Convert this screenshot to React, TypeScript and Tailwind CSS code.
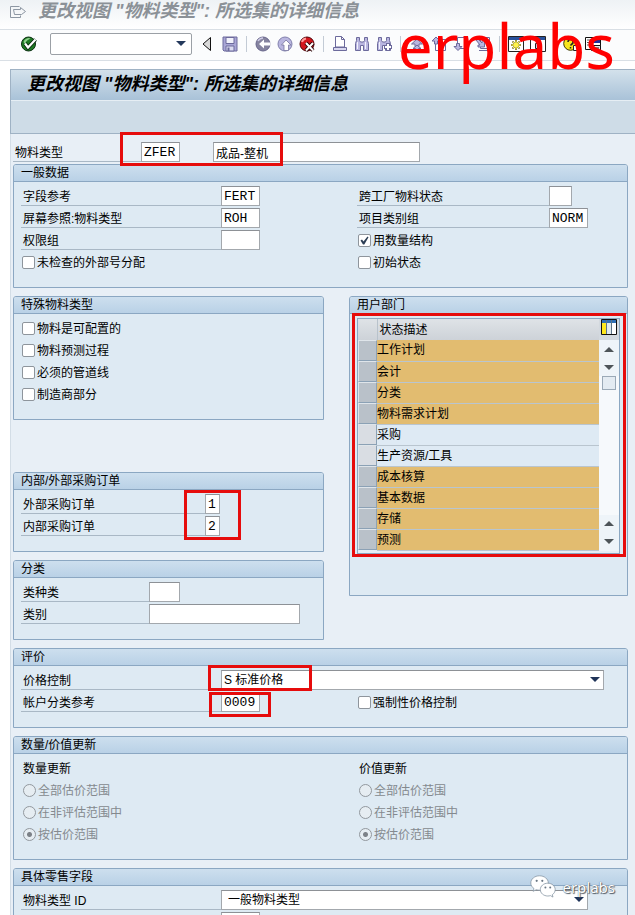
import React, { useId, useState } from 'react';

const DEPARTMENTS = [
  { name: '工作计划', selected: true },
  { name: '会计', selected: true },
  { name: '分类', selected: true },
  { name: '物料需求计划', selected: true },
  { name: '采购', selected: false },
  { name: '生产资源/工具', selected: false },
  { name: '成本核算', selected: true },
  { name: '基本数据', selected: true },
  { name: '存储', selected: true },
  { name: '预测', selected: true },
];

const RANGES = ['全部估价范围', '在非评估范围中', '按估价范围'];

/* ---------- Toolbar icons ---------- */

function Icon({ children }: { children: React.ReactNode }) {
  return (
    <svg viewBox="0 0 16 16" className="block size-4" fill="none">
      {children}
    </svg>
  );
}

const LILAC = '#b9b6e0';
const INK = '#6c6a9c';

const OkIcon = () => (
  <Icon>
    <circle cx="7.5" cy="8" r="7" fill="#1f7a24" stroke="#0b2f12" />
    <path d="M2.5 6a5.5 5.5 0 0 1 7-3.6C7 3.5 5 5 4 8z" fill="#8fd08c" />
    <path d="M4 7.5l3 4L14.5 3.5" stroke="#06260c" strokeWidth="4" />
    <path d="M4 7.5l3 4L14.5 3.5" stroke="#fff" strokeWidth="2.2" />
  </Icon>
);

const CollapseIcon = () => (
  <Icon>
    <path d="M12.5 1.5v13L5 8z" fill="#d9d9d9" stroke="#111" />
  </Icon>
);

const SaveIcon = () => (
  <Icon>
    <path d="M1 1h14v14H2l-1-1z" fill="#a9a6d6" stroke={INK} />
    <path d="M4 1.5h8v6H4z" fill="#f1f1fb" stroke={INK} />
    <path d="M4 10h8v5H4z" fill="#dcdcf2" stroke={INK} />
    <path d="M5.5 11.5h2V15h-2z" fill={INK} />
  </Icon>
);

const BackIcon = () => (
  <Icon>
    <circle cx="8" cy="8" r="7" fill="#85839f" stroke="#67658b" />
    <path d="M3 5a6 6 0 0 1 5-3" stroke="#cfcde6" strokeWidth="1.5" />
    <path d="M4 8l5-4.5v3h6.5v3H9v3z" fill="#fff" />
  </Icon>
);

const ExitIcon = () => (
  <Icon>
    <circle cx="8" cy="8" r="7" fill={LILAC} stroke="#8180ac" />
    <path d="M9 4L4.500 9H7v5.500h4.500V9H14z" fill="#fff" stroke="#77759f" strokeWidth=".8" />
  </Icon>
);

const CancelIcon = () => (
  <Icon>
    <circle cx="8" cy="8" r="7" fill="#d3141c" stroke="#4a0508" />
    <path d="M3 6a5 5 0 0 1 4-3.500" stroke="#ff9a9a" strokeWidth="2" />
    <path d="M7 7l7 7.500M14 7l-7 7.500" stroke="#2b0204" strokeWidth="4" />
    <path d="M7 7l7 7.500M14 7l-7 7.500" stroke="#fff" strokeWidth="2" />
  </Icon>
);

const PrintIcon = () => (
  <Icon>
    <path d="M3.500.500h6l3 3V11h-9z" fill="#fff" stroke={INK} />
    <path d="M9.500.500v3h3" stroke={INK} />
    <path d="M1.500 11.500h13v3h-13z" fill="#d8d7ee" stroke={INK} />
  </Icon>
);

const Binoculars = () => (
  <path
    d="M2.500 1.500h3v3l1 1.500h3l1-1.500v-3h3v3l1 3v7h-5v-5h-3v5h-5v-7l1-3z"
    fill={LILAC}
    stroke={INK}
  />
);

const FindIcon = () => (
  <Icon>
    <Binoculars />
    <path d="M3.500 6v7M11.500 6v7" stroke="#f3f3fc" />
  </Icon>
);

const FindNextIcon = () => (
  <Icon>
    <Binoculars />
    <path d="M3.500 6v7" stroke="#f3f3fc" />
    <path d="M12 7v8M8 11h8" stroke={INK} strokeWidth="4" />
    <path d="M12 8v6M9 11h6" stroke="#fff" strokeWidth="2" />
  </Icon>
);

const FirstPageIcon = () => (
  <Icon>
    <path d="M3.500 1.500h9" stroke={INK} />
    <path d="M8 3L2.500 8H6v2.500h4V8h3.500z" fill={LILAC} stroke={INK} />
    <path d="M8 9l-4 3.500h2.500V15h3v-2.500H12z" fill={LILAC} stroke={INK} />
  </Icon>
);

const PrevPageIcon = () => (
  <Icon>
    <path d="M4.500 3.500h10v11h-10z" fill="#fff" stroke={INK} />
    <path d="M5 1L1 5h2.500v3h3V5H9z" fill={LILAC} stroke={INK} />
  </Icon>
);

const NextPageIcon = () => (
  <Icon>
    <path d="M4.500 1.500h10v11h-10z" fill="#fff" stroke={INK} />
    <path d="M5 14.500l-4-4h2.500v-3h3v3H9z" fill={LILAC} stroke={INK} />
  </Icon>
);

const LastPageIcon = () => (
  <Icon>
    <path d="M5.500 1.500h9v11h-9z" fill="#fff" stroke={INK} />
    <path d="M2 2l5 5V4.500h2.500V11H3V9h2L1 4z" fill={LILAC} stroke={INK} />
    <path d="M4 14.500h9" stroke={INK} />
  </Icon>
);

const NewSessionIcon = () => (
  <Icon>
    <path d="M.5.500h15v15H.500z" fill="#fff" stroke="#222" />
    <path d="M1 1h14v3H1z" fill="#27509b" />
    <path d="M8 4v10M3 9h10M4.500 5.500l7 7M11.500 5.500l-7 7" stroke="#5b5200" strokeWidth="1.600" />
    <path d="M8 4.500v9M3.500 9h9M5 6l6 6M11 6l-6 6" stroke="#fff34a" />
    <circle cx="8" cy="9" r="2.500" fill="#fff34a" />
  </Icon>
);

const ShortcutIcon = () => (
  <Icon>
    <path d="M.5.500h15v15H.500z" fill="#fff" stroke="#222" />
    <path d="M1 1h14v3H1z" fill="#27509b" />
    <path d="M5.500 7.500h5v5h-5z" fill="#cfe0f4" stroke="#222" />
  </Icon>
);

const HelpIcon = () => (
  <Icon>
    <circle cx="7.500" cy="7.500" r="6.800" fill="#f7e61c" stroke="#3b3700" />
    <path d="M5 6a2.500 2.500 0 1 1 3.500 2.300l-1 1.200M7.500 11v1.500" stroke="#222" strokeWidth="1.500" />
    <path d="M10.500 9.500h5v5h-5z" fill="#fff" stroke="#222" />
  </Icon>
);

const LayoutIcon = () => (
  <Icon>
    <path d="M.5 1.500h15v12H.500z" fill="#fff" stroke="#111" />
    <path d="M8 2h7v5H8z" fill="#1e2f9b" />
    <path d="M2 4h5M2 6.500h5M2 9h4" stroke="#555" />
    <path d="M6.500 9.500h9v5h-9z" fill="#e8e8e8" stroke="#111" />
    <path d="M8 12h6" stroke="#111" />
  </Icon>
);

const TableSettingsIcon = () => (
  <Icon>
    <path d="M.5.500h15v15H.500z" fill="#fff" stroke="#111" />
    <path d="M1 1h14v3H1z" fill="#2f6fb5" />
    <path d="M1 4h4.500v11H1z" fill="#ffe81e" />
    <path d="M6 4h4v11H6z" fill="#dfe8ee" />
    <path d="M5.500 1v14M10.500 1v14" stroke="#5d7488" />
  </Icon>
);

const WeChatIcon = () => (
  <svg viewBox="0 0 26 24" className="h-6 w-[26px]" fill="#fff" stroke="#8795a3" strokeWidth=".8">
    <path d="M9.500.8C4.600.8.800 4 .800 8c0 2.300 1.200 4.200 3.200 5.600L3.200 16.300l3.100-1.600c1 .3 2.100.5 3.200.5 4.900 0 8.800-3.200 8.800-7.200S14.400.8 9.500.8z" />
    <path d="M17.800 8.200c-4.200 0-7.500 2.900-7.500 6.400s3.300 6.400 7.500 6.400c.9 0 1.800-.1 2.600-.4l2.600 1.500-.7-2.400c1.800-1.200 2.900-3 2.900-5.100 0-3.500-3.200-6.400-7.400-6.400z" />
    <g fill="#6b7885" stroke="none">
      <circle cx="6.700" cy="5.800" r="1.100" />
      <circle cx="12.300" cy="5.800" r="1.100" />
      <circle cx="15.400" cy="12.500" r="1" />
      <circle cx="20.200" cy="12.500" r="1" />
    </g>
  </svg>
);

/* ---------- Form building blocks ---------- */

function ToolButton({ label, children }: { label: string; children: React.ReactNode }) {
  return (
    <button type="button" aria-label={label} title={label} className="size-4 shrink-0">
      {children}
    </button>
  );
}

const Separator = () => <span className="mx-0.5 h-4 w-px shrink-0 bg-[#c3cbd5]" />;

const FIELD =
  'h-5 border border-[#a3a8ad] border-t-[#8d9196] bg-white px-0.5 font-["Liberation_Mono","Noto_Sans_CJK_SC",monospace] text-[13px] leading-4 text-black outline-none focus:bg-[#fff9cf]';

const LABEL = 'block h-5 shrink-0 border-b border-[#a9b8c5] pl-0.5 leading-[22px]';

type FieldProps = { label: string; labelWidth: string; width: string; value?: string };

function Field({ label, labelWidth, width, value = '' }: FieldProps) {
  const id = useId();
  return (
    <div className="flex h-[22px]">
      <label htmlFor={id} className={`${LABEL} ${labelWidth}`}>{label}</label>
      <input id={id} type="text" defaultValue={value} className={`${FIELD} ${width}`} />
    </div>
  );
}

function Arrow({ up = false }: { up?: boolean }) {
  return (
    <svg viewBox="0 0 10 5" className="h-[5px] w-2.5" fill="currentColor">
      <path d={up ? 'M0 5h10L5 0z' : 'M0 0h10L5 5z'} />
    </svg>
  );
}

type SelectProps = { label: string; options: string[]; className: string; indent: string };

function SelectField({ label, options, className, indent }: SelectProps) {
  const id = useId();
  return (
    <div className={`flex h-[22px] ${className}`}>
      <label htmlFor={id} className={`${LABEL} w-[200px]`}>{label}</label>
      <div className="relative h-5 flex-1">
        <select
          id={id}
          className={`block h-5 w-full appearance-none border border-[#a3a8ad] border-t-[#8d9196] bg-white pr-5 text-xs leading-4 text-black outline-none ${indent}`}
        >
          {options.map((o) => (
            <option key={o}>{o}</option>
          ))}
        </select>
        <span className="pointer-events-none absolute top-[7px] right-1 text-[#1f3358]">
          <Arrow />
        </span>
      </div>
    </div>
  );
}

function Check({ label, defaultChecked = false }: { label: string; defaultChecked?: boolean }) {
  return (
    <label className="flex h-[22px] items-start pl-px leading-[22px]">
      <span className="mt-1 mr-0.5 grid shrink-0">
        <input
          type="checkbox"
          defaultChecked={defaultChecked}
          className="peer col-start-1 row-start-1 size-[13px] appearance-none rounded-[2px] border border-[#8e959c] bg-white"
        />
        <svg
          viewBox="0 0 13 13"
          className="pointer-events-none invisible col-start-1 row-start-1 size-[13px] peer-checked:visible"
          fill="#2c3e55"
        >
          <path d="M2.500 6.500L4 5.500l1.500 2L9.500 2.500l1 .7L6.300 10.500H5z" />
        </svg>
      </span>
      {label}
    </label>
  );
}

function RadioGroup({ title, name }: { title: string; name: string }) {
  return (
    <fieldset disabled className="min-w-0">
      <legend className="h-[22px] pl-0.5 leading-[22px]">{title}</legend>
      {RANGES.map((r, i) => (
        <label key={r} className="flex h-[22px] items-start pl-0.5 leading-[22px] text-[#84898e]">
          <input
            type="radio"
            name={name}
            defaultChecked={i === 2}
            className="mt-1 mr-0.5 size-[13px] shrink-0 appearance-none rounded-full border border-[#92989e] bg-[#e6edf2] checked:bg-[radial-gradient(circle,#7c8187_0_2px,#e6edf2_3px)]"
          />
          {r}
        </label>
      ))}
    </fieldset>
  );
}

function Group({ title, className = '', children }: { title: string; className?: string; children: React.ReactNode }) {
  return (
    <section className={`rounded-t-[3px] border border-[#8ba7c2] bg-[#deeaf3] ${className}`}>
      <h2 className="h-[17px] rounded-t-[2px] border-b border-[#8ba7c2] bg-linear-to-b from-[#cddfee] to-[#b9d1e6] pl-[7px] leading-4">
        {title}
      </h2>
      <div className="relative px-[7px] pt-1 pb-[13px]">{children}</div>
    </section>
  );
}

// red frame that points at the important values
const Mark = ({ className }: { className: string }) => (
  <div className={`pointer-events-none absolute border-3 border-[#e60c0c] ${className}`} />
);

function ScrollButton({ up = false, label }: { up?: boolean; label: string }) {
  return (
    <button
      type="button"
      aria-label={label}
      className="grid h-[18px] w-full place-items-center bg-[#eef4f9] text-[#4d5459]"
    >
      <Arrow up={up} />
    </button>
  );
}

function DepartmentTable() {
  const [rows, setRows] = useState(DEPARTMENTS);

  const toggle = (index: number) => {
    setRows(rows.map((r, i) => (i === index ? { ...r, selected: !r.selected } : r)));
  };

  return (
    <div className="flex border border-[#8ba7c2] bg-[#e6eef5] pb-0.5">
      <table className="min-w-0 flex-1 border-collapse">
        <thead>
          <tr className="h-[21px] bg-linear-to-b from-[#dfe3e7] to-[#cdd2d8]">
            <th className="w-[19px] border-r border-[#b8c2cb] p-0" aria-label="选择" />
            <th className="p-0 pl-0.5 text-left leading-5 font-normal">状态描述</th>
          </tr>
        </thead>
        <tbody>
          {rows.map((row, i) => (
            <tr key={row.name} className="h-[21px]">
              <td className="p-0">
                <button
                  type="button"
                  aria-label={row.name}
                  aria-pressed={row.selected}
                  onClick={() => toggle(i)}
                  className={`block h-[21px] w-full border border-t-[#dfe5ea] border-r-[#8ba1b5] border-b-[#8ba1b5] border-l-[#dfe5ea] ${row.selected ? 'bg-[#b9c1c9]' : 'bg-[#d9dde3]'}`}
                />
              </td>
              <td className={`border-b border-[#b9c5cf] p-0 leading-5 ${row.selected ? 'bg-[#e2bc70]' : 'bg-[#deeaf4]'}`}>
                {row.name}
              </td>
            </tr>
          ))}
        </tbody>
      </table>
      <div className="flex w-5 flex-col bg-[#f6f9fc]">
        <button type="button" aria-label="表格设置" className="flex h-[21px] justify-center bg-[#d3d9df]">
          <TableSettingsIcon />
        </button>
        <ScrollButton up label="第一行" />
        <ScrollButton label="下一行" />
        <div className="flex-1">
          <div className="mx-[3px] h-3.5 border border-[#9aa9b7] bg-[#e3ebf2]" />
        </div>
        <ScrollButton up label="上一行" />
        <ScrollButton label="最后一行" />
      </div>
    </div>
  );
}

export default function App() {
  return (
    <div className='relative h-screen overflow-hidden bg-white font-["Liberation_Sans","Noto_Sans_CJK_SC",sans-serif] text-xs text-black'>
      {/* Window title */}
      <header className="flex h-[30px] items-start gap-3 border-b border-[#d9dfe5] bg-linear-to-b from-[#eef2f5] to-white pl-2.5">
        <svg viewBox="0 0 16 12" className="mt-1.5 h-3 w-4 shrink-0" fill="none" stroke="#8d97a3">
          <path d="M9.500.500h-9v11h10v-2" />
          <path d="M3.500 3.500h7v-2l5 4-4 3h-7z" />
        </svg>
        <p className="text-lg leading-[22px] font-bold whitespace-nowrap text-[#8b9197] italic">更改视图 "物料类型": 所选集的详细信息</p>
      </header>

      {/* Standard toolbar */}
      <nav className="flex h-[31px] items-center gap-1.5 border-b border-[#d9dfe5] bg-[#fbfcfd] pb-0.5 pl-[21px]">
        <ToolButton label="确认"><OkIcon /></ToolButton>
        <div className="relative ml-[7px] h-[22px] w-[142px] shrink-0">
          <input
            type="text"
            aria-label="命令"
            className="block h-[22px] w-full rounded-[2px] border border-[#9ba0a6] bg-white pr-5 pl-1 outline-none"
          />
          <span className="pointer-events-none absolute top-2 right-1.5 text-[#24395c]"><Arrow /></span>
        </div>
        <div className="flex gap-2">
          <ToolButton label="收起"><CollapseIcon /></ToolButton>
          <ToolButton label="保存"><SaveIcon /></ToolButton>
        </div>
        <Separator />
        <ToolButton label="返回"><BackIcon /></ToolButton>
        <ToolButton label="退出"><ExitIcon /></ToolButton>
        <ToolButton label="取消"><CancelIcon /></ToolButton>
        <Separator />
        <ToolButton label="打印"><PrintIcon /></ToolButton>
        <ToolButton label="查找"><FindIcon /></ToolButton>
        <ToolButton label="查找下一个"><FindNextIcon /></ToolButton>
        <Separator />
        <ToolButton label="首页"><FirstPageIcon /></ToolButton>
        <ToolButton label="上一页"><PrevPageIcon /></ToolButton>
        <ToolButton label="下一页"><NextPageIcon /></ToolButton>
        <ToolButton label="末页"><LastPageIcon /></ToolButton>
        <Separator />
        <ToolButton label="新会话"><NewSessionIcon /></ToolButton>
        <ToolButton label="快捷方式"><ShortcutIcon /></ToolButton>
        <Separator />
        <ToolButton label="帮助"><HelpIcon /></ToolButton>
        <ToolButton label="定制布局"><LayoutIcon /></ToolButton>
      </nav>

      <main className="mt-2 ml-2.5">
        <div className="border border-r-0 border-[#9fb2c4]">
          <h1 className="h-[31px] border-b border-[#e6eef4] bg-linear-to-b from-[#d3e1eb] to-[#a9c2d8] pl-4 text-lg leading-7 font-bold whitespace-nowrap italic">
            更改视图 "物料类型": 所选集的详细信息
          </h1>
          <div className="h-8 bg-[#cedce7]" />
        </div>

        <form className="border-l border-[#d3dde6] bg-[#e8eff6] pt-2 pr-[7px] pb-2 pl-0.5" onSubmit={(e) => e.preventDefault()}>
          <div className="relative flex h-[22px]">
            <label htmlFor="material-type" className={`${LABEL} w-32`}>物料类型</label>
            <input id="material-type" type="text" defaultValue="ZFER" className={`${FIELD} w-[39px]`} />
            <input
              type="text"
              aria-label="物料类型描述"
              defaultValue="成品-整机"
              className="ml-[33px] h-5 w-[207px] border border-[#a3a8ad] border-t-[#8d9196] bg-white px-0.5 text-xs leading-4 outline-none"
            />
            <Mark className="-top-2.5 left-[107px] z-10 h-[34px] w-[163px]" />
          </div>

          <Group title="一般数据">
            <div className="grid grid-cols-[336px_1fr]">
              <div>
                <Field label="字段参考" labelWidth="w-[200px]" width="w-[39px]" value="FERT" />
                <Field label="屏幕参照:物料类型" labelWidth="w-[200px]" width="w-[39px]" value="ROH" />
                <Field label="权限组" labelWidth="w-[200px]" width="w-[39px]" />
                <Check label="未检查的外部号分配" />
              </div>
              <div>
                <Field label="跨工厂物料状态" labelWidth="w-48" width="w-[23px]" />
                <Field label="项目类别组" labelWidth="w-48" width="w-[39px]" value="NORM" />
                <Check label="用数量结构" defaultChecked />
                <Check label="初始状态" />
              </div>
            </div>
          </Group>

          <div className="my-2 grid grid-cols-[311px_1fr] gap-x-[25px]">
            <div className="flex flex-col">
              <Group title="特殊物料类型">
                <Check label="物料是可配置的" />
                <Check label="物料预测过程" />
                <Check label="必须的管道线" />
                <Check label="制造商部分" />
              </Group>
              <Group title="内部/外部采购订单" className="mt-[52px]">
                <Field label="外部采购订单" labelWidth="w-[184px]" width="w-[15px]" value="1" />
                <Field label="内部采购订单" labelWidth="w-[184px]" width="w-[15px]" value="2" />
                <Mark className="top-0 left-[170px] h-[50px] w-[57px]" />
              </Group>
              <Group title="分类" className="mt-2">
                <Field label="类种类" labelWidth="w-32" width="w-[31px]" />
                <Field label="类别" labelWidth="w-32" width="w-[151px]" />
              </Group>
            </div>
            <Group title="用户部门" className="h-[300px]">
              <DepartmentTable />
              <Mark className="-top-px right-px left-0.5 h-[244px]" />
            </Group>
          </div>

          <Group title="评价">
            <SelectField label="价格控制" options={['S 标准价格', 'V 移动平均价格/周期单价']} className="pr-4" indent="pl-0.5" />
            <div className="grid grid-cols-[336px_1fr]">
              <Field label="帐户分类参考" labelWidth="w-[200px]" width="w-[39px]" value="0009" />
              <Check label="强制性价格控制" />
            </div>
            <Mark className="-top-px left-[194px] h-[26px] w-[104px]" />
            <Mark className="top-[26px] left-[195px] h-[25px] w-[62px]" />
          </Group>

          <Group title="数量/价值更新" className="my-2">
            <div className="grid grid-cols-[336px_1fr]">
              <RadioGroup title="数量更新" name="quantity-update" />
              <RadioGroup title="价值更新" name="value-update" />
            </div>
          </Group>

          <Group title="具体零售字段">
            <SelectField label="物料类型 ID" options={['一般物料类型']} className="pr-8" indent="pl-1.5" />
            <Field label="" labelWidth="w-[200px]" width="w-[39px]" />
          </Group>
        </form>
      </main>

      {/* Watermarks */}
      <div className='pointer-events-none absolute top-0 right-5 font-["Noto_Sans",sans-serif] text-[62px] leading-[90px] text-[#ff0000]'>
        erplabs
      </div>
      <div className='pointer-events-none absolute right-5 bottom-4 flex items-center gap-1.5 font-["Noto_Sans",sans-serif] text-[15px] leading-6 text-white [text-shadow:1px_1px_1px_#4b5560,0_0_1px_#4b5560]'>
        <WeChatIcon />
        erplabs
      </div>
    </div>
  );
}
